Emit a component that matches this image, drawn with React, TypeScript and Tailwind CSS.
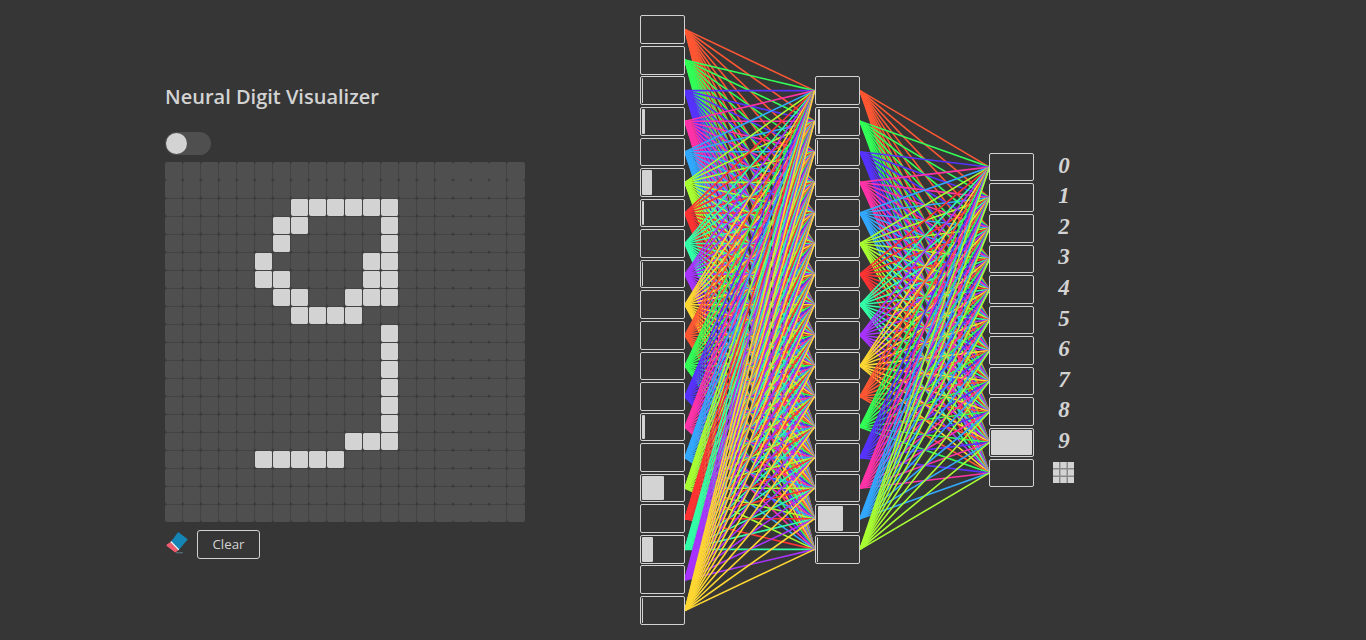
import React from "react";

const COLORS = ["#ff5733", "#33ff57", "#5733ff", "#ff33a8", "#33a8ff", "#a8ff33", "#ff3333", "#33ffa8", "#a833ff", "#ffd733"];
const P = 30.58;
const H = 640;
const CX = 320;
const yAt = (i: number, n: number) => CX + (i - (n - 1) / 2) * P;

const LIT: Record<number, number[]> = {
  2: [7, 8, 9, 10, 11, 12],
  3: [6, 7, 12],
  4: [6, 12],
  5: [5, 11, 12],
  6: [5, 6, 11, 12],
  7: [6, 7, 10, 11, 12],
  8: [7, 8, 9, 10],
  9: [12],
  10: [12],
  11: [12],
  12: [12],
  13: [12],
  14: [12],
  15: [10, 11, 12],
  16: [5, 6, 7, 8, 9],
};

function Grid() {
  const cells = [];
  for (let r = 0; r < 20; r++) {
    for (let c = 0; c < 20; c++) {
      const lit = (LIT[r] || []).includes(c);
      const noRight = c === 15 || c === 16 || c === 17 || c === 19;
      const noTop = r === 0 || r === 1;
      cells.push(
        <div
          key={r * 20 + c}
          className={`h-[18px] w-[18px] rounded-[2px] border-[#434343] ${lit ? "bg-[#d3d3d3]" : "bg-[#4f4f4f]"} ${noRight ? "" : "border-r"} ${noTop ? "" : "border-t"}`}
        />
      );
    }
  }
  return <div className="grid w-[360px] grid-cols-[repeat(20,18px)]">{cells}</div>;
}

function Eraser() {
  return (
    <svg width="24" height="26" viewBox="165 530 24 26" className="shrink-0">
      <path d="M176 552.8h7" stroke="#5f7f8a" strokeWidth="1" />
      <path d="M178.2 532l9.6 7.2-8.6 10.2-8-8.2z" fill="#1585b5" />
      <path d="M171.2 541l8 8.2-1 1.2-8-8.2z" fill="#f2f2f2" />
      <path d="M170.2 542.2l8 8.2-3 2-8.4-6.4a1 1 0 0 1 0-1.4z" fill="#f25c6e" />
    </svg>
  );
}

function Layer({ n, bars }: { n: number; bars: Record<number, { w: number; ml?: number }> }) {
  return (
    <div className="flex w-[45px] shrink-0 flex-col gap-[1.98px]">
      {Array.from({ length: n }, (_, i) => {
        const b = bars[i];
        return (
          <div key={i} className="h-[28.6px] rounded-[2px] border border-[#d3d3d3] p-[1px]">
            {b && <div className="h-full rounded-[1px] bg-[#d3d3d3]" style={{ width: b.w, marginLeft: b.ml ?? 0 }} />}
          </div>
        );
      })}
    </div>
  );
}

function Links({ from, to }: { from: number; to: number }) {
  const W = 129.5;
  const lines = [];
  for (let i = 0; i < from; i++) {
    for (let j = 0; j < to; j++) {
      lines.push(<line key={i * 100 + j} x1={0} y1={yAt(i, from)} x2={W} y2={yAt(j, to)} stroke={COLORS[i % 10]} strokeWidth={1.6} />);
    }
  }
  return (
    <svg width={W} height={H} viewBox={`0 0 ${W} ${H}`} className="shrink-0">
      {lines}
    </svg>
  );
}

function GridIcon() {
  return (
    <svg width="22" height="22" viewBox="0 0 22 22">
      <rect x="0" y="0" width="21" height="21" fill="#8a8a8a" />
      {[0, 7.5, 15].map((x) =>
        [0, 7.5, 15].map((y) => <rect key={`${x}-${y}`} x={x} y={y} width="6" height="6" fill="#d3d3d3" />)
      )}
    </svg>
  );
}

function Labels() {
  return (
    <div className="ml-[19px] flex w-[22px] shrink-0 flex-col gap-[1.98px] text-[#d3d3d3]">
      {["0", "1", "2", "3", "4", "5", "6", "7", "8", "9"].map((d) => (
        <div
          key={d}
          className="flex h-[28.6px] -translate-y-[2px] items-center justify-center font-['Liberation_Serif',serif] text-[23px] font-bold italic leading-none"
        >
          {d}
        </div>
      ))}
      <div className="flex h-[28.6px] items-center justify-center">
        <GridIcon />
      </div>
    </div>
  );
}

export default function App() {
  return (
    <div className="flex h-[640px] w-full overflow-hidden bg-[#363636] pl-[165px] font-['Open_Sans',sans-serif] text-[#d3d3d3]">
      <div className="flex w-[360px] shrink-0 flex-col pt-[83px]">
        <h1 className="h-[28px] text-[20px] font-semibold leading-[28px]">Neural Digit Visualizer</h1>
        <div className="mt-[21px] flex h-[23px] w-[46px] items-center rounded-full bg-[#4f4f4f] pl-[1px]">
          <div className="h-[21px] w-[21px] rounded-full bg-[#d3d3d3]" />
        </div>
        <div className="mt-[7px]">
          <Grid />
        </div>
        <div className="mt-[8px] flex items-start gap-[8px]">
          <Eraser />
          <button className="h-[29px] w-[63px] rounded-[3px] border border-[#d3d3d3] text-[13.33px]">Clear</button>
        </div>
      </div>
      <div className="ml-[115px] flex items-center">
        <Layer
          n={20}
          bars={{
            2: { w: 1 },
            3: { w: 3 },
            5: { w: 10 },
            6: { w: 2 },
            8: { w: 1 },
            13: { w: 3 },
            15: { w: 22 },
            17: { w: 11 },
            19: { w: 1 },
          }}
        />
        <Links from={20} to={16} />
        <Layer n={16} bars={{ 1: { w: 2, ml: 1 }, 2: { w: 1 }, 14: { w: 25, ml: 1 }, 15: { w: 1 } }} />
        <Links from={16} to={11} />
        <Layer n={11} bars={{ 9: { w: 41 } }} />
        <Labels />
      </div>
    </div>
  );
}
